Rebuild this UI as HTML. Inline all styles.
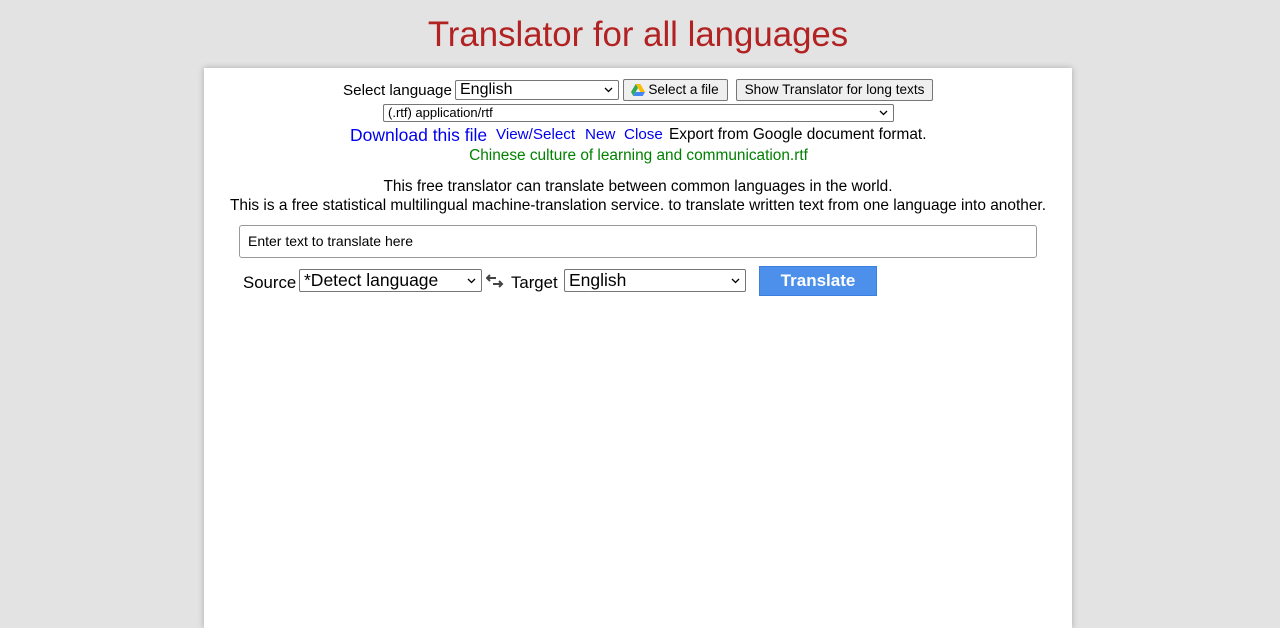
<!DOCTYPE html>
<html><head><meta charset="utf-8"><style>
body{margin:0;width:1280px;height:616px;background:#e3e3e3;font-family:"Liberation Sans",sans-serif;position:relative;overflow:hidden}
.a{position:absolute;white-space:nowrap}
h1{position:absolute;left:0;width:1276px;top:15px;margin:0;text-align:center;font-weight:normal;font-size:34.8px;color:#b22222}
.card{position:absolute;left:204px;top:68px;width:868px;height:560px;background:#fff;box-shadow:0 0 6px rgba(0,0,0,.25)}
.sel{position:absolute;border:1px solid #767676;border-radius:2px;background:#fff;box-sizing:border-box;color:#000;padding-left:4px;white-space:nowrap}
.sel svg{position:absolute;right:5px;top:50%;margin-top:-3px}
.btn{position:absolute;border:1px solid #767676;border-radius:2px;background:#efefef;box-sizing:border-box;font-size:13.6px;text-align:center;white-space:nowrap}
.blue{color:#0000ee}
</style></head><body>
<h1>Translator for all languages</h1>
<div class="card"></div>
<div class="a" style="left:343px;top:82px;font-size:15.2px">Select language</div>
<div class="sel" style="left:455px;top:80px;width:164px;height:20px;font-size:16px;line-height:18px">English<svg width="9" height="6"><path d="M1 1l3.5 3.5L8 1" stroke="#000" fill="none" stroke-width="1.3"/></svg></div>
<div class="btn" style="left:623px;top:79px;width:105px;height:22px;line-height:20px;padding-left:16px"><svg style="position:absolute;left:7px;top:4px" width="14" height="12" viewBox="0 0 14 12"><path d="M4.7 0h4.6L14 8H9.3z" fill="#fbbc04"/><path d="M4.7 0L0 8l2.3 4 4.7-8z" fill="#34a853"/><path d="M2.3 12h9.4L14 8H4.7z" fill="#4285f4"/></svg>Select a file</div>
<div class="btn" style="left:736px;top:79px;width:197px;height:22px;line-height:20px">Show Translator for long texts</div>
<div class="sel" style="left:383px;top:104px;width:511px;height:18px;font-size:13px;line-height:16px">(.rtf) application/rtf<svg width="9" height="6"><path d="M1 1l3.5 3.5L8 1" stroke="#000" fill="none" stroke-width="1.3"/></svg></div>
<div class="a blue" style="left:350px;top:125px;font-size:17.5px">Download this file</div>
<div class="a blue" style="left:496px;top:126px;font-size:15.2px">View/Select</div>
<div class="a blue" style="left:585px;top:126px;font-size:15.2px">New</div>
<div class="a blue" style="left:624px;top:126px;font-size:15.2px">Close</div>
<div class="a" style="left:669px;top:126px;font-size:15.4px">Export from Google document format.</div>
<div class="a" style="left:0;width:1277px;text-align:center;top:147px;font-size:15.4px;color:#008000">Chinese culture of learning and communication.rtf</div>
<div class="a" style="left:0;width:1276px;text-align:center;top:178px;font-size:15.4px">This free translator can translate between common languages in the world.</div>
<div class="a" style="left:0;width:1276px;text-align:center;top:197px;font-size:15.45px">This is a free statistical multilingual machine-translation service. to translate written text from one language into another.</div>
<div style="position:absolute;left:239px;top:225px;width:798px;height:33px;border:1px solid #999;border-radius:3px;box-sizing:border-box;font-size:14px;line-height:31px;padding-left:8px">Enter text to translate here</div>
<div class="a" style="left:243px;top:273px;font-size:16.8px">Source</div>
<div class="sel" style="left:299px;top:269px;width:183px;height:23px;font-size:17.5px;line-height:21px">*Detect language<svg width="9" height="6"><path d="M1 1l3.5 3.5L8 1" stroke="#000" fill="none" stroke-width="1.3"/></svg></div>
<svg style="position:absolute;left:486px;top:274px" width="18" height="14" viewBox="0 0 18 14"><path d="M1 4h9M4 1L1 4l3 3" stroke="#444" stroke-width="2" fill="none"/><path d="M7 10h9M13 7l3 3-3 3" stroke="#444" stroke-width="2" fill="none"/></svg>
<div class="a" style="left:511px;top:273px;font-size:16.8px">Target</div>
<div class="sel" style="left:564px;top:269px;width:182px;height:23px;font-size:17.5px;line-height:21px">English<svg width="9" height="6"><path d="M1 1l3.5 3.5L8 1" stroke="#000" fill="none" stroke-width="1.3"/></svg></div>
<div style="position:absolute;left:759px;top:266px;width:118px;height:30px;background:#4d90ec;border:1px solid #3b7fe0;box-sizing:border-box;color:#fff;font-weight:bold;font-size:17px;text-align:center;line-height:28px">Translate</div>
</body></html>
